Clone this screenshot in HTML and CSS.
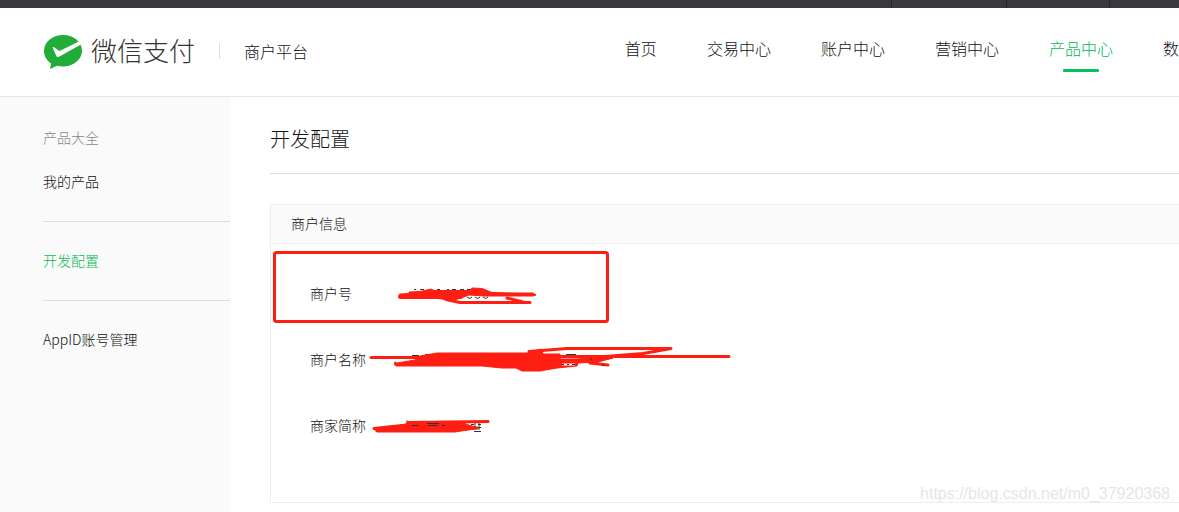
FILE: index.html
```html
<!DOCTYPE html>
<html lang="zh-CN">
<head>
<meta charset="utf-8">
<meta name="viewport" content="width=device-width, initial-scale=1">
<title>微信支付 商户平台</title>
<link rel="stylesheet" href="styles.css">
</head>
<body>
<div class="topbar"><span class="topbar-cell"></span><span class="topbar-cell topbar-narrow"></span><span class="topbar-cell topbar-last"></span></div>
<header class="header">
  <div class="brand">
    <svg class="brand-mark" viewBox="0 0 40 36" width="40" height="36" aria-hidden="true">
      <path fill="#22ac38" d="M20 1C9.300 1 1 8 1 17c0 5.300 2.700 9.500 7 12.500L7 35l7-3.300c2 .5 4 .8 6 .8 10.700 0 19-7 19-15.700C39 8 30.700 1 20 1z"/>
      <path fill="#fff" d="M9.500 13.500c.5-.8 1.300-.8 2 0l5 3.500L36 7.500l2 3L16 22.800c-1 .5-2 .3-2.500-.6z"/>
    </svg>
    <span class="brand-name">微信支付</span>
    <span class="brand-sub">商户平台</span>
  </div>
  <nav class="nav">
    <a class="nav-link" href="#">首页</a>
    <a class="nav-link" href="#">交易中心</a>
    <a class="nav-link" href="#">账户中心</a>
    <a class="nav-link" href="#">营销中心</a>
    <a class="nav-link nav-active" href="#">产品中心</a>
    <a class="nav-link nav-short" href="#">数</a>
  </nav>
</header>
<div class="layout">
  <aside class="side">
    <div class="side-group side-first">
      <span class="side-title">产品大全</span>
      <a class="side-link" href="#">我的产品</a>
    </div>
    <div class="side-group"><a class="side-link side-active" href="#">开发配置</a></div>
    <div class="side-group"><a class="side-link" href="#">AppID账号管理</a></div>
  </aside>
  <main class="main">
    <h1 class="title">开发配置</h1>
    <section class="card">
      <h2 class="card-title">商户信息</h2>
      <div class="card-body">
        <div class="row">商户号</div>
        <div class="row">商户名称</div>
        <div class="row">商家简称</div>
        <svg class="marks" viewBox="271 244 470 210" width="470" height="210" aria-hidden="true">
          <rect x="274.500" y="252.500" width="333" height="69" rx="2" fill="none" stroke="#ff1f12" stroke-width="3"/>
          <g fill="none" stroke="#333" stroke-width="1">
            <path d="M414 289.500h2M420 289.500h4M437 289.500h3M447 289.500h2M452 289.500h4M460 289.500h4M467 289.500h4"/>
            <path d="M412 355.500h7M425 354.500h7M407 420.500v3M471 424.500h3M475 423v7M478 424.500h3M479 422v8M474 431.500h7M476 427.500h5"/>
          </g>
          <g fill="#ff1f12" stroke="#ff1f12" stroke-linejoin="round" stroke-linecap="round">
            <path d="M400 294l9-.5L409 292l11-.5 9-2 2-.5 3 1.500h36l2-2.500 10 .5 10 4 23 .5h18l3 2-3 1h-49l-15-1-8 3-10 3-9-2-12-1.500h-26z"/>
            <path fill="none" stroke-width="5" d="M400.500 296.500h60"/>
            <path fill="none" stroke-width="3" d="M446 299.500l14 3h70M507 298l8 2 8 2"/>
            <path d="M397 363l18-3 5-4 17-3h90l14-4 2 5h17v5h17l18-2 18 1-17 4-18 1-1 3-20 2-17 3h-18l-6-3h-14l-20-2h-86q-3-2-1-4z"/>
            <path fill="none" stroke-width="3" d="M371 357.500h61M529 351.500l38-3h104l-28 5-38 3M560 356.500h169M612 357l-22 6 18 2M570 361l26-1M396 364.500h30"/>
            <path d="M376 429l26-4 9-3h50l4 2 11 3-3 2-18 3h-78q-3-1-1-3z"/>
            <path fill="none" stroke-width="3" d="M374 428.500l28-3M408 422.500l80-1M466 422l-10 8 21-2"/>
          </g>
          <g fill="none" stroke="#fff">
            <path stroke-width="3" d="M470 298.500h17"/>
            <path stroke-width="2" d="M562 364.500h13"/>
          </g>
          <g fill="none" stroke="#333">
            <path d="M467 297q3 3 5 0M475 297q3 3 5 0M483 297q3 3 5 0"/>
            <path d="M566 354.500h10M562 364.500h2M567 364.500h2M572 364.500h3M590 358l2 2M602 365.500h3"/>
            <path d="M412 425.500h6M427 423.500h12M428 425.500h10M442 425.500h3"/>
          </g>
        </svg>
      </div>
    </section>
  </main>
</div>
<div class="watermark">https://blog.csdn.net/m0_37920368</div>
</body>
</html>
```
FILE: styles.css
```css
* { box-sizing: border-box; }
body {
  margin: 0;
  min-height: 100vh;
  display: flex;
  flex-direction: column;
  overflow: hidden;
  position: relative;
  background: #fff;
  color: #111;
  font-family: "Noto Sans CJK SC", sans-serif;
  font-size: 14px;
  font-weight: 300;
  line-height: 20px;
}
a { color: inherit; text-decoration: none; }
.topbar {
  height: 8px;
  background: #393a3e;
  display: flex;
  justify-content: flex-end;
}
.topbar-cell { width: 115px; border-left: 1px solid #242528; }
.topbar-narrow { width: 103px; }
.topbar-last { width: 70px; }
.header {
  height: 89px;
  display: flex;
  align-items: center;
  border-bottom: 1px solid #e7e7ef;
}
.brand {
  flex: 0 0 53%;
  display: flex;
  align-items: center;
  padding-left: 43px;
}
.brand-mark { flex: none; }
.brand-name {
  margin-left: 8px;
  padding-bottom: 4px;
  font-size: 26px;
  line-height: 36px;
  color: #333;
}
.brand-sub {
  margin: 0 0 3px 24px;
  padding-left: 24px;
  border-left: 1px solid #ddd;
  font-size: 16px;
  line-height: 16px;
}
.nav { display: flex; gap: 50px; }
.nav-link {
  flex: none;
  display: flex;
  flex-direction: column;
  align-items: center;
  gap: 9px;
  padding-top: 3px;
  font-size: 16px;
  line-height: 24px;
}
.nav-link::after {
  content: "";
  width: 36px;
  height: 3px;
  border-radius: 1px;
}
.nav-link:first-child::after { width: 32px; }
.nav-short::after { width: 16px; }
.nav-active { color: #00b956; }
.nav-active::after { background: #07c160; }
.layout { flex: 1; display: flex; }
.side {
  flex: 0 0 230px;
  padding-left: 43px;
  background: #fafafa;
}
.side-group {
  display: flex;
  flex-direction: column;
  gap: 24px;
  padding: 28px 0 30px;
}
.side-group + .side-group { border-top: 1px solid #ddd; }
.side-first { padding-top: 30px; }
.side-title { color: #888; }
.side-active { color: #00b956; }
.main { flex: 1; padding: 28px 0 9px 40px; }
.title {
  margin: 0 0 30px;
  padding-bottom: 20px;
  border-bottom: 1px solid #ddd;
  font-size: 20px;
  font-weight: 300;
  line-height: 28px;
}
.card { border: 1px solid #eee; border-right: 0; }
.card-title {
  margin: 0;
  padding: 8px 20px 10px;
  border-bottom: 1px solid #eee;
  background: #fafafa;
  font-size: 14px;
  font-weight: 300;
  line-height: 20px;
}
.card-body {
  position: relative;
  display: flex;
  flex-direction: column;
  gap: 46px;
  padding: 39px 39px 67px;
}
.marks { position: absolute; left: 0; top: 0; }
.watermark {
  position: absolute;
  right: 9px;
  bottom: 8px;
  color: #e6e6e6;
  font-family: "Liberation Sans", sans-serif;
  font-size: 16px;
  font-weight: 400;
}
```
